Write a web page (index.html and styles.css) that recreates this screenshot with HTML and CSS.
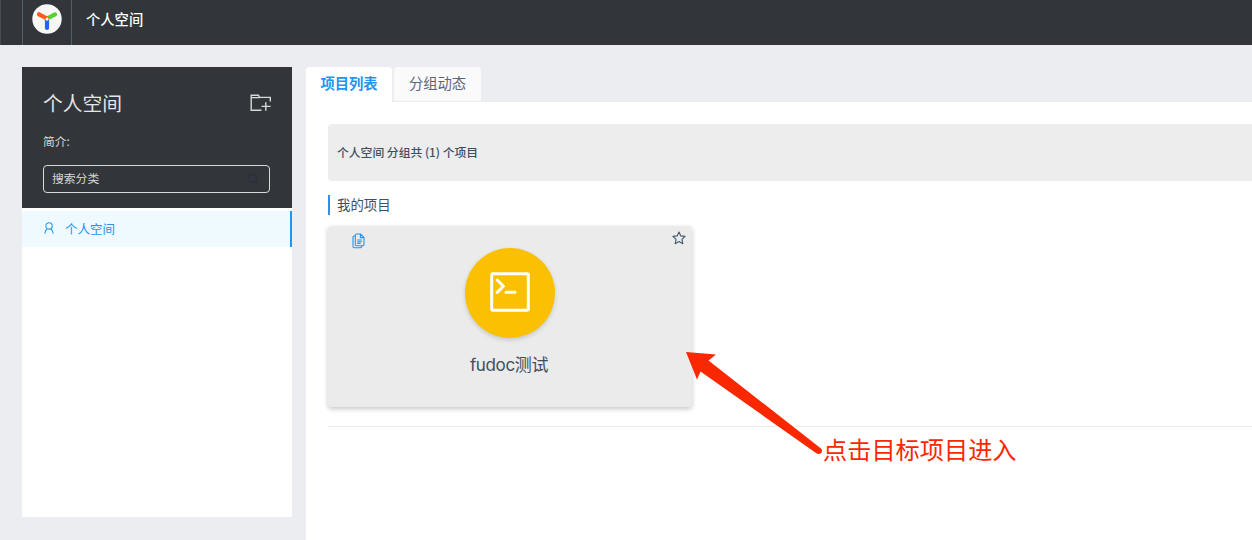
FILE: index.html
```html
<!DOCTYPE html>
<html lang="zh-CN">
<head>
<meta charset="utf-8">
<title>个人空间</title>
<link rel="stylesheet" href="styles.css">
</head>
<body>
<header class="header">
  <a class="logo">
    <svg width="30" height="30" viewBox="0 0 30 30" fill="none" stroke-linecap="round" stroke-width="4.2">
      <circle cx="15" cy="15" r="14.7" fill="#f7f7f7"/>
      <path d="M15 15.500V24" stroke="#2563f4"/>
      <path d="M15 14.500L23 10.400" stroke="#52d32c"/>
      <path d="M15 14.500L7 10.300" stroke="#ff5a1c"/>
      <circle cx="15" cy="15" r="1.5" fill="#fff"/>
    </svg>
  </a>
  <span class="crumb">个人空间</span>
</header>
<div class="layout">
  <aside class="sidebar">
    <div class="group">
      <div class="group-head">
        <h1 class="group-name">个人空间</h1>
        <svg class="folder" width="22" height="18" viewBox="0 0 22 18" fill="none" stroke="#d8d9da" stroke-width="1.4">
          <path d="M11.5 16.3H1.2V1.2H8.4L9.6 3.4H20.3V7.6M1.2 3.6H9.6M15.8 8.2V16.8M11.5 12.4H20.6"/>
        </svg>
      </div>
      <p class="desc">简介:</p>
      <div class="search">
        <span>搜索分类</span>
        <svg width="12" height="12" viewBox="0 0 12 12" fill="none" stroke="#253040" stroke-width="1.1"><circle cx="5.3" cy="5.3" r="4.3"/><path d="M8.4 8.4L11.2 11.2"/></svg>
      </div>
    </div>
    <div class="menu-item">
      <svg width="10" height="12" viewBox="0 0 10 12" fill="none" stroke="#2395f1" stroke-width="1.1"><circle cx="5" cy="3.9" r="3.2"/><path d="M3.3 6.8C1.8 7.8 1 9.3 .8 11.6M6.7 6.8C8.2 7.8 9 9.3 9.2 11.6"/></svg>
      <span>个人空间</span>
    </div>
  </aside>
  <main class="main">
    <nav class="tabs">
      <a class="tab active">项目列表</a>
      <a class="tab">分组动态</a>
    </nav>
    <section class="panel">
      <div class="summary">个人空间 分组共 (1) 个项目</div>
      <h2 class="owner">我的项目</h2>
      <div class="card">
        <svg class="copy" width="13" height="16" viewBox="0 0 13 16" fill="none" stroke="#2395f1" stroke-width="1.1">
          <path d="M3.4 3H2.2Q1 3 1 4.2V13.6Q1 14.8 2.2 14.8H8.4Q9.6 14.8 9.6 13.6V13"/>
          <path d="M4.4 1H8.6L12 4.4V11.6Q12 12.8 10.8 12.8H4.4Q3.3 12.8 3.3 11.6V2.1Q3.3 1 4.4 1ZM8.4 1V4.6H12M5.2 7H9.8M5.2 8.7H9.8M5.2 10.4H8.6"/>
        </svg>
        <svg class="star" width="14" height="14" viewBox="0 0 14 14" fill="none" stroke="#46586b" stroke-width="1.1" stroke-linejoin="round">
          <path d="M7 1L8.8 4.9L13.1 5.4L9.900 8.300L10.800 12.700L7 10.600L3.200 12.700L4.100 8.300L.9 5.400L5.200 4.900Z"/>
        </svg>
        <div class="project-icon">
          <svg width="40" height="40" viewBox="0 0 40 40" fill="none" stroke="#fff" stroke-width="3" stroke-linecap="round" stroke-linejoin="round">
            <rect x="1.7" y="1.7" width="36.6" height="36.6" rx="1.3"/>
            <path d="M7.2 8L13.4 14.2L7.2 20.4M16 20.2H25"/>
          </svg>
        </div>
        <div class="project-name">fudoc测试</div>
      </div>
      <hr class="divider">
    </section>
  </main>
</div>
<svg class="arrow" width="140" height="105" viewBox="0 0 140 105">
  <path d="M1 2L31 4.500L23.500 10.500L136 98.500C139 101.500 135 106 131 103L15.500 21.500L12 29.500Z" fill="#fa2800"/>
</svg>
<div class="annotation">点击目标项目进入</div>
</body>
</html>
```
FILE: styles.css
```css
* { box-sizing: border-box; }
body {
  margin: 0;
  width: 1252px;
  height: 540px;
  overflow: hidden;
  background: #ecedf1;
  color: #3d4f61;
  font-family: "Noto Sans CJK SC", sans-serif;
  font-size: 12px;
}
.header {
  height: 45px;
  padding-left: 22px;
  display: flex;
  background: #32363a;
  border-left: 1px solid #434c54;
}
.logo {
  width: 50px;
  margin-left: -1px;
  padding: 4px 0 0 9px;
  border-left: 1px solid #52606c;
  border-right: 1px solid #52606c;
}
.logo svg { display: block; }
.crumb {
  margin-left: 14px;
  line-height: 37px;
  font-size: 14.3px;
  font-weight: 500;
  color: #fff;
}
.layout {
  display: flex;
  gap: 14px;
  padding: 22px 0 0 22px;
  height: 495px;
}
.sidebar {
  width: 270px;
  height: 450px;
  flex: none;
  background: #fff;
}
.group {
  height: 141px;
  padding: 20px 22px 0 21px;
  background: #32363a;
  color: #d6d7d8;
}
.group-head {
  height: 32px;
  display: flex;
  align-items: center;
  justify-content: space-between;
}
.group-name {
  margin: 0;
  font-size: 19.8px;
  line-height: 32px;
  font-weight: 400;
  color: #e4e5e6;
}
.folder { margin-right: -2px; }
.desc {
  margin: 12px 0 15px;
  line-height: 19px;
  font-size: 11.8px;
}
.search {
  height: 28px;
  padding: 0 10px 0 8px;
  display: flex;
  align-items: center;
  justify-content: space-between;
  border: 1px solid #d9d9d9;
  border-radius: 4px;
  font-size: 11.8px;
}
.search span { padding-bottom: 3px; }
.menu-item {
  height: 36px;
  margin-top: 3px;
  padding: 0 0 2px 22px;
  display: flex;
  align-items: center;
  gap: 11px;
  background: #eefaff;
  border-right: 2px solid #2395f1;
  color: #2395f1;
  font-size: 12.5px;
}
.main {
  flex: 1;
  display: flex;
  flex-direction: column;
}
.tabs {
  height: 35px;
  display: flex;
  gap: 2px;
}
.tab {
  width: 87px;
  height: 34px;
  line-height: 31px;
  text-align: center;
  font-size: 14.3px;
  color: #5c6578;
  background: #fafafa;
  border-radius: 4px 4px 0 0;
}
.tab.active {
  width: 86px;
  height: 35px;
  background: #fff;
  color: #2395f1;
  font-weight: 700;
}
.panel {
  flex: 1;
  padding: 22px 0 0 22px;
  background: #fff;
}
.summary {
  height: 57px;
  line-height: 55px;
  padding-left: 9px;
  background: #ededed;
  border-radius: 4px 0 0 4px;
  font-size: 11.8px;
  font-weight: 500;
}
.owner {
  margin: 14px 0 11px;
  height: 20px;
  line-height: 18px;
  padding-left: 7px;
  border-left: 2px solid #2395f1;
  font-size: 13.4px;
  font-weight: 400;
}
.card {
  position: relative;
  width: 364px;
  height: 181px;
  padding-top: 22px;
  display: flex;
  flex-direction: column;
  align-items: center;
  background: #ebebeb;
  border-radius: 4px;
  box-shadow: 0 2px 5px rgba(50, 54, 58, .28);
}
.copy { position: absolute; left: 24px; top: 7px; }
.star { position: absolute; right: 6px; top: 5px; }
.project-icon {
  width: 90px;
  height: 90px;
  display: flex;
  align-items: center;
  justify-content: center;
  padding: 0 1px 2px 0;
  background: #fcc002;
  border-radius: 50%;
  box-shadow: 0 2px 4px rgba(50, 54, 58, .2);
}
.project-name {
  margin: 14px 2px 0 0;
  line-height: 26px;
  font-family: Inter, "Noto Sans CJK SC", sans-serif;
  font-size: 17px;
  letter-spacing: -.35px;
}
.divider {
  margin: 19px 0 0;
  border: 0;
  border-top: 1px solid #ececec;
}
.arrow { position: absolute; left: 685px; top: 350px; }
.annotation {
  position: absolute;
  left: 823px;
  top: 431px;
  line-height: 36px;
  font-size: 24.2px;
  font-weight: 400;
  color: #fa2800;
  white-space: nowrap;
}
```
